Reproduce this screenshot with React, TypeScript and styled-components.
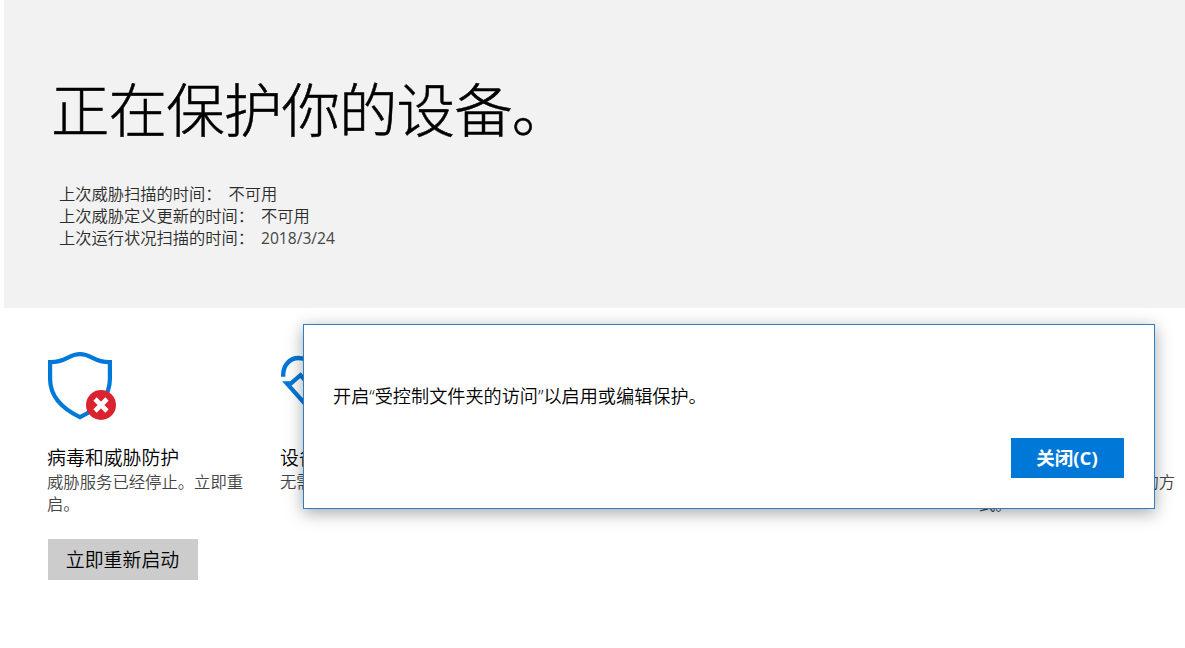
import styled, { createGlobalStyle } from "styled-components";

const GlobalStyle = createGlobalStyle`
  * {
    box-sizing: border-box;
  }

  body {
    margin: 0;
    background-color: #ffffff;
    font-family: "Open Sans", "Noto Sans CJK SC", sans-serif;
    overflow: hidden;
  }
`;

const Container = styled.div`
  position: relative;
  height: 648px;
  padding-left: 4px;
  overflow: hidden;
`;

const Banner = styled.header`
  height: 308px;
  padding: 65px 0 0 47px;
  background-color: #f2f2f2;
`;

const Heading = styled.h1`
  margin: 0;
  font-family: "Noto Sans CJK SC", sans-serif;
  font-size: 58.5px;
  font-weight: 300;
  line-height: 84px;
  letter-spacing: -0.9px;
  color: #000000;
  -webkit-text-stroke: 0.5px #000000;
`;

const StatusList = styled.div`
  padding: 34px 0 0 8px;
`;

const StatusRow = styled.div`
  display: flex;
  gap: 7px;
  font-size: 16.25px;
  font-weight: 350;
  line-height: 22px;
  color: #2b2b2b;
`;

const DateText = styled.span`
  font-size: 15.6px;
  font-weight: 400;
  color: #444444;
`;

const CardGrid = styled.main`
  display: grid;
  grid-template-columns: repeat(5, 233px);
  padding: 42px 0 0 44px;
`;

const Card = styled.section`
  padding-right: 34px;
`;

const IconBox = styled.div`
  height: 96px;

  svg {
    display: block;
  }
`;

const CardTitle = styled.h2`
  margin: 0 0 0 -1px;
  font-size: 18.9px;
  font-weight: 350;
  line-height: 25px;
  white-space: nowrap;
  color: #000000;
`;

const CardText = styled.p`
  margin: 0 0 0 -1px;
  font-size: 16.35px;
  font-weight: 350;
  line-height: 22px;
  color: #444444;
`;

const RestartBtn = styled.button`
  width: 150px;
  height: 41px;
  margin-top: 24px;
  padding: 1px 1px 0 0;
  border: none;
  background-color: #cccccc;
  color: #000000;
  font-family: inherit;
  font-size: 18.9px;
  font-weight: 350;
  line-height: 41px;
`;

const Dialog = styled.div`
  position: absolute;
  top: 324px;
  left: 303px;
  display: flex;
  flex-direction: column;
  justify-content: space-between;
  width: 852px;
  height: 185px;
  padding: 57px 30px 30px 29px;
  border: 1px solid #2f7fbf;
  background-color: #ffffff;
  box-shadow: 0 4px 16px rgba(0, 0, 0, 0.35);
`;

const DialogText = styled.p`
  margin: 0;
  font-size: 18.15px;
  font-weight: 350;
  line-height: 28px;
  color: #000000;
`;

const CloseBtn = styled.button`
  align-self: flex-end;
  width: 113px;
  height: 40px;
  padding: 0 1px 0 0;
  border: none;
  background-color: #0078d7;
  color: #ffffff;
  font-family: inherit;
  font-size: 18.5px;
  font-weight: 700;
  line-height: 40px;
`;

const statuses = [
  { label: "上次威胁扫描的时间：", value: "不可用" },
  { label: "上次威胁定义更新的时间：", value: "不可用" },
];

function ShieldIcon() {
  return (
    <svg width="72" height="72" viewBox="0 0 72 72" fill="none">
      <path
        d="M2.1 12.2C18 12.6 20 4.2 32 4.2S46 12.6 61.9 12.2V29C61.9 48 47 60 32 67.2C17 60 2.1 48 2.1 29Z"
        stroke="#0078d7"
        strokeWidth="4.2"
      />
      <circle cx="53" cy="55" r="15" fill="#d9232e" />
      <path d="M47 49L59 61M59 49L47 61" stroke="#ffffff" strokeWidth="4.6" />
    </svg>
  );
}

function HeartIcon() {
  return (
    <svg width="72" height="72" viewBox="0 0 72 72" fill="none">
      <path
        d="M2.2 26.7V25C2.2 15 9 8 17.5 8C25 8 30 12 34 18C38 12 43 8 50.5 8C59 8 66 15 66 25C66 40 48 54 34 66"
        stroke="#0078d7"
        strokeWidth="4.4"
      />
      <path
        d="M34 65L5.8 33.4H10L19.5 25.2L30 37"
        stroke="#0078d7"
        strokeWidth="4.2"
      />
    </svg>
  );
}

function App() {
  return (
    <Container>
      <GlobalStyle />
      <Banner>
        <Heading>正在保护你的设备。</Heading>
        <StatusList>
          {statuses.map((status) => (
            <StatusRow key={status.label}>
              <span>{status.label}</span>
              <span>{status.value}</span>
            </StatusRow>
          ))}
          <StatusRow>
            <span>上次运行状况扫描的时间：</span>
            <DateText>2018/3/24</DateText>
          </StatusRow>
        </StatusList>
      </Banner>
      <CardGrid>
        <Card>
          <IconBox>
            <ShieldIcon />
          </IconBox>
          <CardTitle>病毒和威胁防护</CardTitle>
          <CardText>威胁服务已经停止。立即重启。</CardText>
          <RestartBtn>立即重新启动</RestartBtn>
        </Card>
        <Card>
          <IconBox>
            <HeartIcon />
          </IconBox>
          <CardTitle>设备性能和运行状况</CardTitle>
          <CardText>无需操作。</CardText>
        </Card>
        <Card />
        <Card />
        <Card>
          <IconBox />
          <CardTitle>家庭选项</CardTitle>
          <CardText>管理你的家庭使用设备的方式。</CardText>
        </Card>
      </CardGrid>
      <Dialog>
        <DialogText>开启“受控制文件夹的访问”以启用或编辑保护。</DialogText>
        <CloseBtn>关闭(C)</CloseBtn>
      </Dialog>
    </Container>
  );
}

export default App;
